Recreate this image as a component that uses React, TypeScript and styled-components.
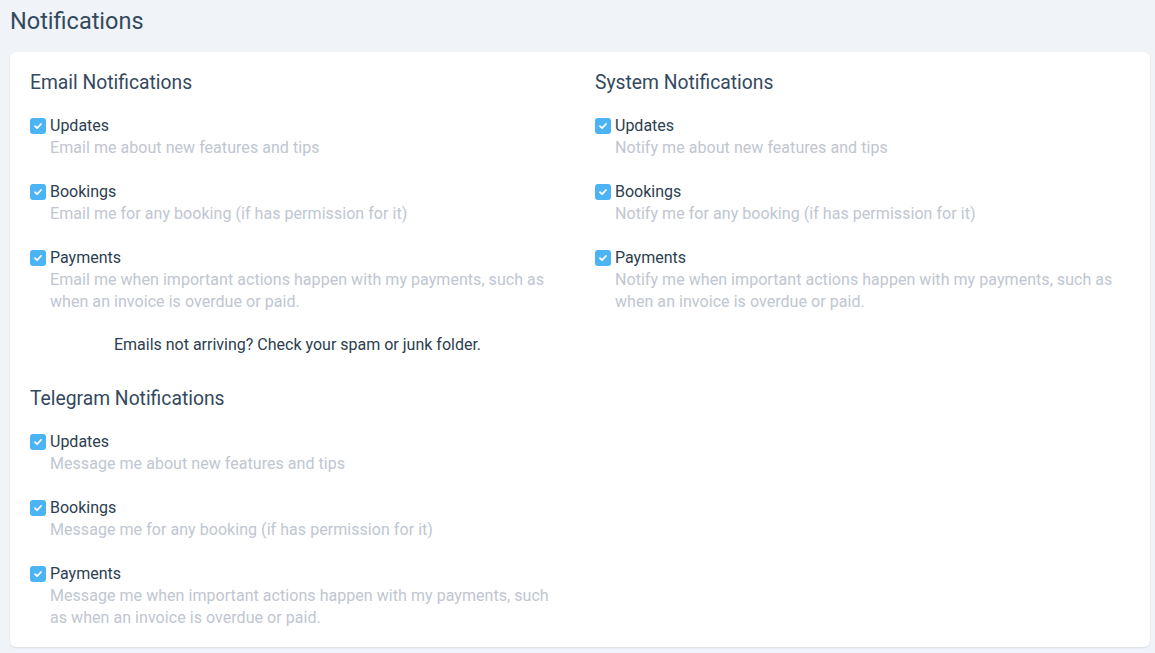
import styled, { createGlobalStyle } from "styled-components";

const GlobalStyle = createGlobalStyle`
  html, body {
    margin: 0;
    padding: 0;
    background: #f0f3f8;
    font-family: Roboto, "Noto Sans", sans-serif;
  }
`;

const Page = styled.div`
  padding: 0 5px 5px 10px;
`;

const PageTitle = styled.h1`
  margin: 0;
  height: 44px;
  padding-top: 7px;
  box-sizing: border-box;
  font-size: 23.5px;
  font-weight: 400;
  line-height: 28px;
  color: #34495e;
`;

const Card = styled.div`
  margin-top: 8px;
  background: #fff;
  border-radius: 6px;
  box-shadow: 0 1px 2px rgba(60, 80, 110, 0.12);
  padding: 18px 5px 18px;
  display: grid;
  grid-template-columns: 1fr 1fr;
`;

const Column = styled.div`
  padding: 0 15px;
`;

const SectionTitle = styled.h2`
  margin: 0 0 19px;
  font-size: 19.3px;
  font-weight: 400;
  line-height: 26px;
  color: #34495e;
`;

const Option = styled.label`
  display: block;
  margin-bottom: 22px;
  &:last-of-type {
    margin-bottom: 0;
  }
`;

const OptionHead = styled.div`
  display: flex;
  align-items: center;
  gap: 4px;
  font-size: 16px;
  line-height: 22px;
  color: #2c3e50;
`;

const Box = styled.span`
  width: 16px;
  height: 16px;
  border-radius: 3px;
  background: #4cb3f5;
  display: inline-flex;
  align-items: center;
  justify-content: center;
  flex-shrink: 0;
`;

const Description = styled.div`
  padding-left: 20px;
  font-size: 16px;
  line-height: 22px;
  letter-spacing: 0.05px;
  color: #c0c6d2;
`;

const Hint = styled.p`
  margin: 21px 0 0;
  text-align: center;
  font-size: 16px;
  line-height: 22px;
  color: #2c3e50;
`;

const Section = styled.section<{ $spaced?: boolean }>`
  margin-top: ${(p) => (p.$spaced ? "30px" : "0")};
`;

type Item = { label: string; text: string };

const Check = () => (
  <Box>
    <svg width="10" height="10" viewBox="0 0 10 10">
      <path
        d="M2 5.2 L4.1 7.2 L8 3"
        fill="none"
        stroke="#fff"
        strokeWidth="1.8"
        strokeLinecap="round"
        strokeLinejoin="round"
      />
    </svg>
  </Box>
);

const Options = ({ items }: { items: Item[] }) => (
  <div>
    {items.map((it) => (
      <Option key={it.label}>
        <OptionHead>
          <Check />
          {it.label}
        </OptionHead>
        <Description>{it.text}</Description>
      </Option>
    ))}
  </div>
);

const email: Item[] = [
  { label: "Updates", text: "Email me about new features and tips" },
  { label: "Bookings", text: "Email me for any booking (if has permission for it)" },
  {
    label: "Payments",
    text: "Email me when important actions happen with my payments, such as when an invoice is overdue or paid.",
  },
];

const telegram: Item[] = [
  { label: "Updates", text: "Message me about new features and tips" },
  { label: "Bookings", text: "Message me for any booking (if has permission for it)" },
  {
    label: "Payments",
    text: "Message me when important actions happen with my payments, such as when an invoice is overdue or paid.",
  },
];

const system: Item[] = [
  { label: "Updates", text: "Notify me about new features and tips" },
  { label: "Bookings", text: "Notify me for any booking (if has permission for it)" },
  {
    label: "Payments",
    text: "Notify me when important actions happen with my payments, such as when an invoice is overdue or paid.",
  },
];

export default function App() {
  return (
    <>
      <GlobalStyle />
      <Page>
        <PageTitle>Notifications</PageTitle>
        <Card>
          <Column>
            <Section>
              <SectionTitle>Email Notifications</SectionTitle>
              <Options items={email} />
              <Hint>Emails not arriving? Check your spam or junk folder.</Hint>
            </Section>
            <Section $spaced>
              <SectionTitle>Telegram Notifications</SectionTitle>
              <Options items={telegram} />
            </Section>
          </Column>
          <Column>
            <Section>
              <SectionTitle>System Notifications</SectionTitle>
              <Options items={system} />
            </Section>
          </Column>
        </Card>
      </Page>
    </>
  );
}
